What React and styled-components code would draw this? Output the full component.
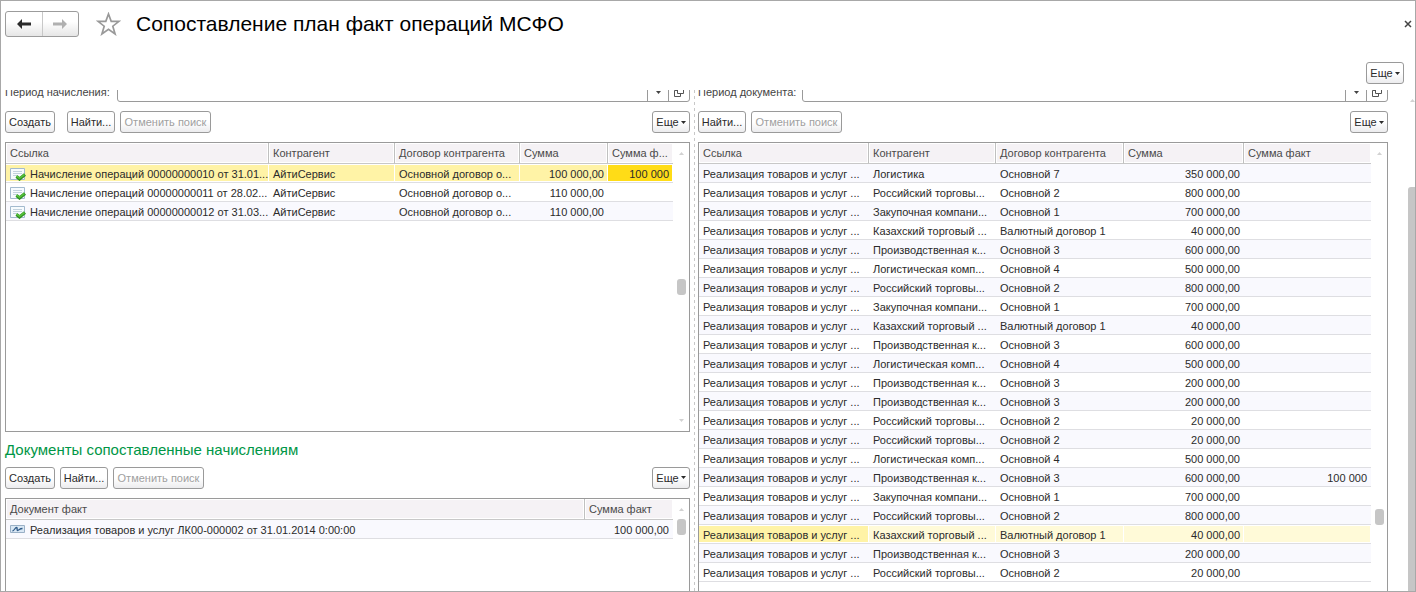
import React from "react";
import styled, { createGlobalStyle, css } from "styled-components";

const Global = createGlobalStyle`
  *, *::before, *::after { box-sizing: border-box; }
  body { margin: 0; background: #fff; }
  body, button, input { font: 11px/14px "Liberation Sans", Arial, sans-serif; color: #2b2b2b; }
`;

const Frame = styled.div`
  display: flex;
  flex-direction: column;
  height: 100vh;
  overflow: hidden;
  border: 1px solid #a8a8a8;
  background: #fff;
`;

const Header = styled.header`
  display: flex;
  align-items: center;
  padding: 10px 3px 0 4px;
`;

const NavGroup = styled.nav`
  display: flex;
  width: 74px;
  height: 26px;
  border: 1px solid #9c9c9c;
  border-radius: 3px;
  background: linear-gradient(#fff 40%, #e6e6e6);
`;

const NavButton = styled.button`
  flex: 1;
  display: grid;
  place-items: center;
  padding: 0;
  border: 0;
  background: none;
  color: ${(p) => (p.disabled ? "#b0b0b0" : "#2b2b2b")};
  & + & { border-left: 1px solid #c8c8c8; }
`;

const IconButton = styled.button`
  display: grid;
  place-items: center;
  padding: 0;
  border: 0;
  background: none;
  color: #444;
`;

const StarButton = styled(IconButton)`
  margin: 0 15px 0 17px;
`;

const Title = styled.h1`
  flex: 1;
  margin: 0;
  font-size: 21px;
  line-height: 26px;
  font-weight: 400;
  color: #000;
`;

const CommandBar = styled.div`
  display: flex;
  justify-content: flex-end;
  padding: 25px 11px 6px 0;
`;

const Button = styled.button`
  display: flex;
  align-items: center;
  justify-content: center;
  flex: none;
  gap: 2px;
  width: ${(p) => p.$width}px;
  height: 22px;
  padding: 0;
  white-space: nowrap;
  border: 1px solid #9a9a9a;
  border-radius: 3px;
  background: linear-gradient(#fff 50%, #ececee);
  color: ${(p) => (p.disabled ? "#a0a0a0" : "#2b2b2b")};
`;

const Body = styled.main`
  flex: 1;
  min-height: 0;
  display: flex;
  padding-left: 4px;
`;

const Pane = styled.section`
  flex: ${(p) => p.$grow} 1 0;
  min-width: 0;
  display: flex;
  flex-direction: column;
`;

const Splitter = styled.div`
  flex: none;
  width: 8px;
  padding-left: 4px;
  &::before {
    content: "";
    display: block;
    width: 1px;
    height: 100%;
    background: repeating-linear-gradient(#c8c8c8 0 3px, transparent 3px 6px);
  }
`;

const FilterRow = styled.div`
  flex: none;
  display: flex;
  align-items: flex-end;
  height: 12px;
  overflow: hidden;
`;

const FilterLabel = styled.label`
  flex: none;
  width: ${(p) => p.$width}px;
  line-height: 20px;
  color: #444;
`;

const Field = styled.div`
  flex: 1;
  display: flex;
  height: 22px;
  border: 1px solid #9a9a9a;
  border-radius: 3px;
`;

const FieldInput = styled.input`
  flex: 1;
  min-width: 0;
  padding: 0 4px;
  border: 0;
  background: none;
`;

const FieldButton = styled(IconButton)`
  width: 21px;
  padding-top: 2px;
  border-left: 1px solid #9a9a9a;
`;

const Toolbar = styled.div`
  flex: none;
  display: flex;
  gap: 5px;
  padding: 9px 0;
  & > :last-child { margin-left: auto; }
`;

const Gap = styled.span`
  width: 2px;
`;

const SectionTitle = styled.h2`
  flex: none;
  margin: 10px 0 0;
  font-size: 15px;
  line-height: 16px;
  font-weight: 400;
  color: #009646;
`;

const List = styled.div`
  flex: ${(p) => p.$grow || 1} 1 0;
  min-height: 0;
  display: flex;
  overflow: hidden;
  border: 1px solid #9a9a9a;
  ${(p) => p.$open && "border-bottom: 0;"}
`;

const TableArea = styled.div`
  flex: 1;
  min-width: 0;
`;

const Table = styled.table`
  width: 100%;
  table-layout: fixed;
  border-collapse: separate;
  border-spacing: 0;
`;

const cell = css`
  overflow: hidden;
  white-space: nowrap;
  font-weight: 400;
`;

const Th = styled.th`
  ${cell}
  height: 21px;
  padding: 0 4px;
  text-align: left;
  color: #4a4a4a;
  background: #f5f2f5;
  border-bottom: 1px solid #c8c8c8;
  border-right: 1px solid #c0c0c0;
  box-shadow: inset 0 0 0 1px #fff;
  &:last-child { border-right: 0; }
`;

const tones = { row: "#fff3a6", soft: "#fffad8", cell: "#ffdc17" };

const Td = styled.td`
  ${cell}
  height: 19px;
  padding: 2px 4px 0;
  text-align: ${(p) => (p.$num ? "right" : "left")};
  border-bottom: 1px solid #dedee2;
  ${(p) =>
    p.$tone &&
    css`
      background: ${tones[p.$tone]};
      box-shadow: inset -1px 0 0 #fff, inset 0 1px 0 #fff, inset 0 -1px 0 #fff;
    `}
`;

const Tr = styled.tr`
  background: ${(p) => (p.$alt ? "#f9f9fe" : "#fff")};
`;

const WithIcon = styled.span`
  display: flex;
  align-items: center;
  gap: 4px;
  & > svg { flex: none; }
`;

const Scroll = styled.div`
  flex: none;
  width: 16px;
  display: flex;
  flex-direction: column;
  align-items: center;
  padding: 8px 0;
`;

const Space = styled.div`
  flex: ${(p) => p.$grow} 1 0;
`;

const Thumb = styled.div`
  flex: none;
  width: 9px;
  height: 16px;
  border-radius: 3px;
  background: #c6c6c6;
`;

const PageScroll = styled.div`
  flex: none;
  width: 27px;
  display: flex;
  flex-direction: column;
  align-items: flex-end;
  padding-top: 8px;
`;

const PageThumb = styled.div`
  flex: 1;
  width: 7px;
  margin-top: 85px;
  border-radius: 3px 0 0 0;
  background: #c6c6c6;
`;

const Caret = () => (
  <svg width="5" height="3" viewBox="0 0 5 3" aria-hidden="true">
    <path d="M0 0h5L2.5 3z" fill="currentColor" />
  </svg>
);

const ScrollArrow = ({ down }) => (
  <svg width="5" height="4" viewBox="0 0 5 4" aria-hidden="true">
    <path d={down ? "M0 0h5L2.5 3z" : "M0 4h5L2.5 1z"} fill="#d2d2d2" />
  </svg>
);

const Arrow = ({ flip }) => (
  <svg width="14" height="10" viewBox="0 0 14 10" aria-hidden="true">
    <path
      d={flip ? "M14 5 9 0v3.5H0v3h9V10z" : "M0 5 5 0v3.5h9v3H5V10z"}
      fill="currentColor"
    />
  </svg>
);

const Star = () => (
  <svg width="25" height="24" viewBox="0 0 25 24" aria-hidden="true">
    <path
      d="M12.500 2l2.700 7.300h7.800l-6.200 4.900 2.300 7.800-6.600-4.600-6.600 4.600 2.300-7.800L2 9.300h7.800z"
      fill="#fff"
      stroke="#999"
      strokeWidth="1.700"
    />
  </svg>
);

const Cross = () => (
  <svg width="8" height="8" viewBox="0 0 8 8" aria-hidden="true">
    <path d="M1 1l6 6M7 1L1 7" stroke="#444" strokeWidth="1.500" />
  </svg>
);

const OpenIcon = () => (
  <svg width="10" height="10" viewBox="0 0 10 10" aria-hidden="true" fill="none" stroke="#555">
    <path d="M3.500 .5h6v6h-6zM3.500 3.500h-3v6h6v-3" />
  </svg>
);

const DocIcon = () => (
  <svg width="16" height="13" viewBox="0 0 16 13" aria-hidden="true">
    <path d="M.5 .5h14v11H.5z" fill="#f7fbfe" stroke="#a3bace" />
    <path d="M3 3.500h9M3 5.500h9M3 7.500h5" stroke="#c3d2de" />
    <path d="M6.500 8.500l3 2.500L15 6.500" fill="none" stroke="#2f8f22" strokeWidth="3.200" />
    <path d="M6.500 8l3 2.300L14.500 6.500" fill="none" stroke="#55c23a" strokeWidth="1.600" />
  </svg>
);

const SaleIcon = () => (
  <svg width="16" height="9" viewBox="0 0 16 9" aria-hidden="true">
    <path d="M.5 .5h14v7H.5z" fill="#d9e7f4" stroke="#9ab0c6" />
    <path d="M2.500 6c2-.5 2.500-3.500 4-3.500 1.300 0 0 3 1.200 3S9.500 3.500 12.500 3.500" fill="none" stroke="#2f5a88" strokeWidth="1.300" />
  </svg>
);

const More = () => (
  <Button type="button" $width={38}>
    Еще <Caret />
  </Button>
);

const Filter = ({ id, label, width }) => (
  <FilterRow>
    <FilterLabel htmlFor={id} $width={width}>{label}</FilterLabel>
    <Field>
      <FieldInput id={id} type="text" />
      <FieldButton type="button" aria-label="Выбрать"><Caret /></FieldButton>
      <FieldButton type="button" aria-label="Открыть"><OpenIcon /></FieldButton>
    </Field>
  </FilterRow>
);

const SearchButtons = () => (
  <>
    <Button type="button" $width={48}>Найти...</Button>
    <Button type="button" $width={91} disabled>Отменить поиск</Button>
  </>
);

const DataTable = ({ columns, rows, icon }) => (
  <TableArea>
    <Table>
      <colgroup>
        {columns.map((c, i) => <col key={i} style={{ width: c.width }} />)}
      </colgroup>
      <thead>
        <tr>{columns.map((c) => <Th key={c.title} scope="col">{c.title}</Th>)}</tr>
      </thead>
      <tbody>
        {rows.map((r, i) => (
          <Tr key={i} $alt={i % 2 === 0}>
            {r.cells.map((text, j) => (
              <Td key={j} $num={columns[j].num} $tone={r.tones && r.tones[j]}>
                {j === 0 && icon ? <WithIcon>{icon}{text}</WithIcon> : text}
              </Td>
            ))}
          </Tr>
        ))}
      </tbody>
    </Table>
  </TableArea>
);

const ListScroll = ({ before, after, end }) => (
  <Scroll>
    <ScrollArrow />
    <Space $grow={before} />
    <Thumb />
    <Space $grow={after} />
    {end && <ScrollArrow down />}
  </Scroll>
);

const accrualColumns = [
  { title: "Ссылка", width: 263 },
  { title: "Контрагент", width: 126 },
  { title: "Договор контрагента", width: 125 },
  { title: "Сумма", width: 88, num: true },
  { title: "Сумма ф...", width: 65, num: true },
];

const accruals = [
  {
    cells: ["Начисление операций 00000000010 от 31.01...", "АйтиСервис", "Основной договор о...", "100 000,00", "100 000"],
    tones: ["row", "row", "row", "row", "cell"],
  },
  { cells: ["Начисление операций 00000000011 от 28.02...", "АйтиСервис", "Основной договор о...", "110 000,00", ""] },
  { cells: ["Начисление операций 00000000012 от 31.03...", "АйтиСервис", "Основной договор о...", "110 000,00", ""] },
];

const matchedColumns = [
  { title: "Документ факт", width: 579 },
  { title: "Сумма факт", width: 88, num: true },
];

const matched = [{ cells: ["Реализация товаров и услуг ЛК00-000002 от 31.01.2014 0:00:00", "100 000,00"] }];

const factColumns = [
  { title: "Ссылка", width: 170 },
  { title: "Контрагент", width: 127 },
  { title: "Договор контрагента", width: 128 },
  { title: "Сумма", width: 120, num: true },
  { title: "Сумма факт", width: 127, num: true },
];

const RUS = "Российский торговы...";
const ZAK = "Закупочная компани...";
const KAZ = "Казахский торговый ...";
const PRO = "Производственная к...";
const LOG = "Логистическая комп...";

const facts = [
  ["Логистика", "Основной 7", "350 000,00"],
  [RUS, "Основной 2", "800 000,00"],
  [ZAK, "Основной 1", "700 000,00"],
  [KAZ, "Валютный договор 1", "40 000,00"],
  [PRO, "Основной 3", "600 000,00"],
  [LOG, "Основной 4", "500 000,00"],
  [RUS, "Основной 2", "800 000,00"],
  [ZAK, "Основной 1", "700 000,00"],
  [KAZ, "Валютный договор 1", "40 000,00"],
  [PRO, "Основной 3", "600 000,00"],
  [LOG, "Основной 4", "500 000,00"],
  [PRO, "Основной 3", "200 000,00"],
  [PRO, "Основной 3", "200 000,00"],
  [RUS, "Основной 2", "20 000,00"],
  [RUS, "Основной 2", "20 000,00"],
  [LOG, "Основной 4", "500 000,00"],
  [PRO, "Основной 3", "600 000,00", "100 000"],
  [ZAK, "Основной 1", "700 000,00"],
  [RUS, "Основной 2", "800 000,00"],
  [KAZ, "Валютный договор 1", "40 000,00"],
  [PRO, "Основной 3", "200 000,00"],
  [RUS, "Основной 2", "20 000,00"],
].map(([partner, contract, sum, fact = ""], i) => ({
  cells: ["Реализация товаров и услуг ...", partner, contract, sum, fact],
  tones: i === 19 ? ["row", "soft", "soft", "soft", "soft"] : null,
}));

export default function App() {
  return (
    <>
      <Global />
      <Frame>
        <Header>
          <NavGroup aria-label="Переходы">
            <NavButton type="button" aria-label="Назад"><Arrow /></NavButton>
            <NavButton type="button" aria-label="Вперед" disabled><Arrow flip /></NavButton>
          </NavGroup>
          <StarButton type="button" aria-label="В избранное"><Star /></StarButton>
          <Title>Сопоставление план факт операций МСФО</Title>
          <IconButton type="button" aria-label="Закрыть"><Cross /></IconButton>
        </Header>
        <CommandBar><More /></CommandBar>
        <Body>
          <Pane $grow={685}>
            <Filter id="accrual-period" label="Период начисления:" width={112} />
            <Toolbar>
              <Button type="button" $width={50}>Создать</Button>
              <Gap />
              <SearchButtons />
              <More />
            </Toolbar>
            <List $grow={290}>
              <DataTable columns={accrualColumns} rows={accruals} icon={<DocIcon />} />
              <ListScroll before={122} after={122} end />
            </List>
            <SectionTitle>Документы сопоставленные начислениям</SectionTitle>
            <Toolbar>
              <Button type="button" $width={50}>Создать</Button>
              <SearchButtons />
              <More />
            </Toolbar>
            <List $grow={93} $open>
              <DataTable columns={matchedColumns} rows={matched} icon={<SaleIcon />} />
              <ListScroll before={8} after={48} />
            </List>
          </Pane>
          <Splitter />
          <Pane $grow={690}>
            <Filter id="document-period" label="Период документа:" width={104} />
            <Toolbar>
              <SearchButtons />
              <More />
            </Toolbar>
            <List $open>
              <DataTable columns={factColumns} rows={facts} />
              <ListScroll before={354} after={58} />
            </List>
          </Pane>
          <PageScroll>
            <ScrollArrow />
            <PageThumb />
          </PageScroll>
        </Body>
      </Frame>
    </>
  );
}
